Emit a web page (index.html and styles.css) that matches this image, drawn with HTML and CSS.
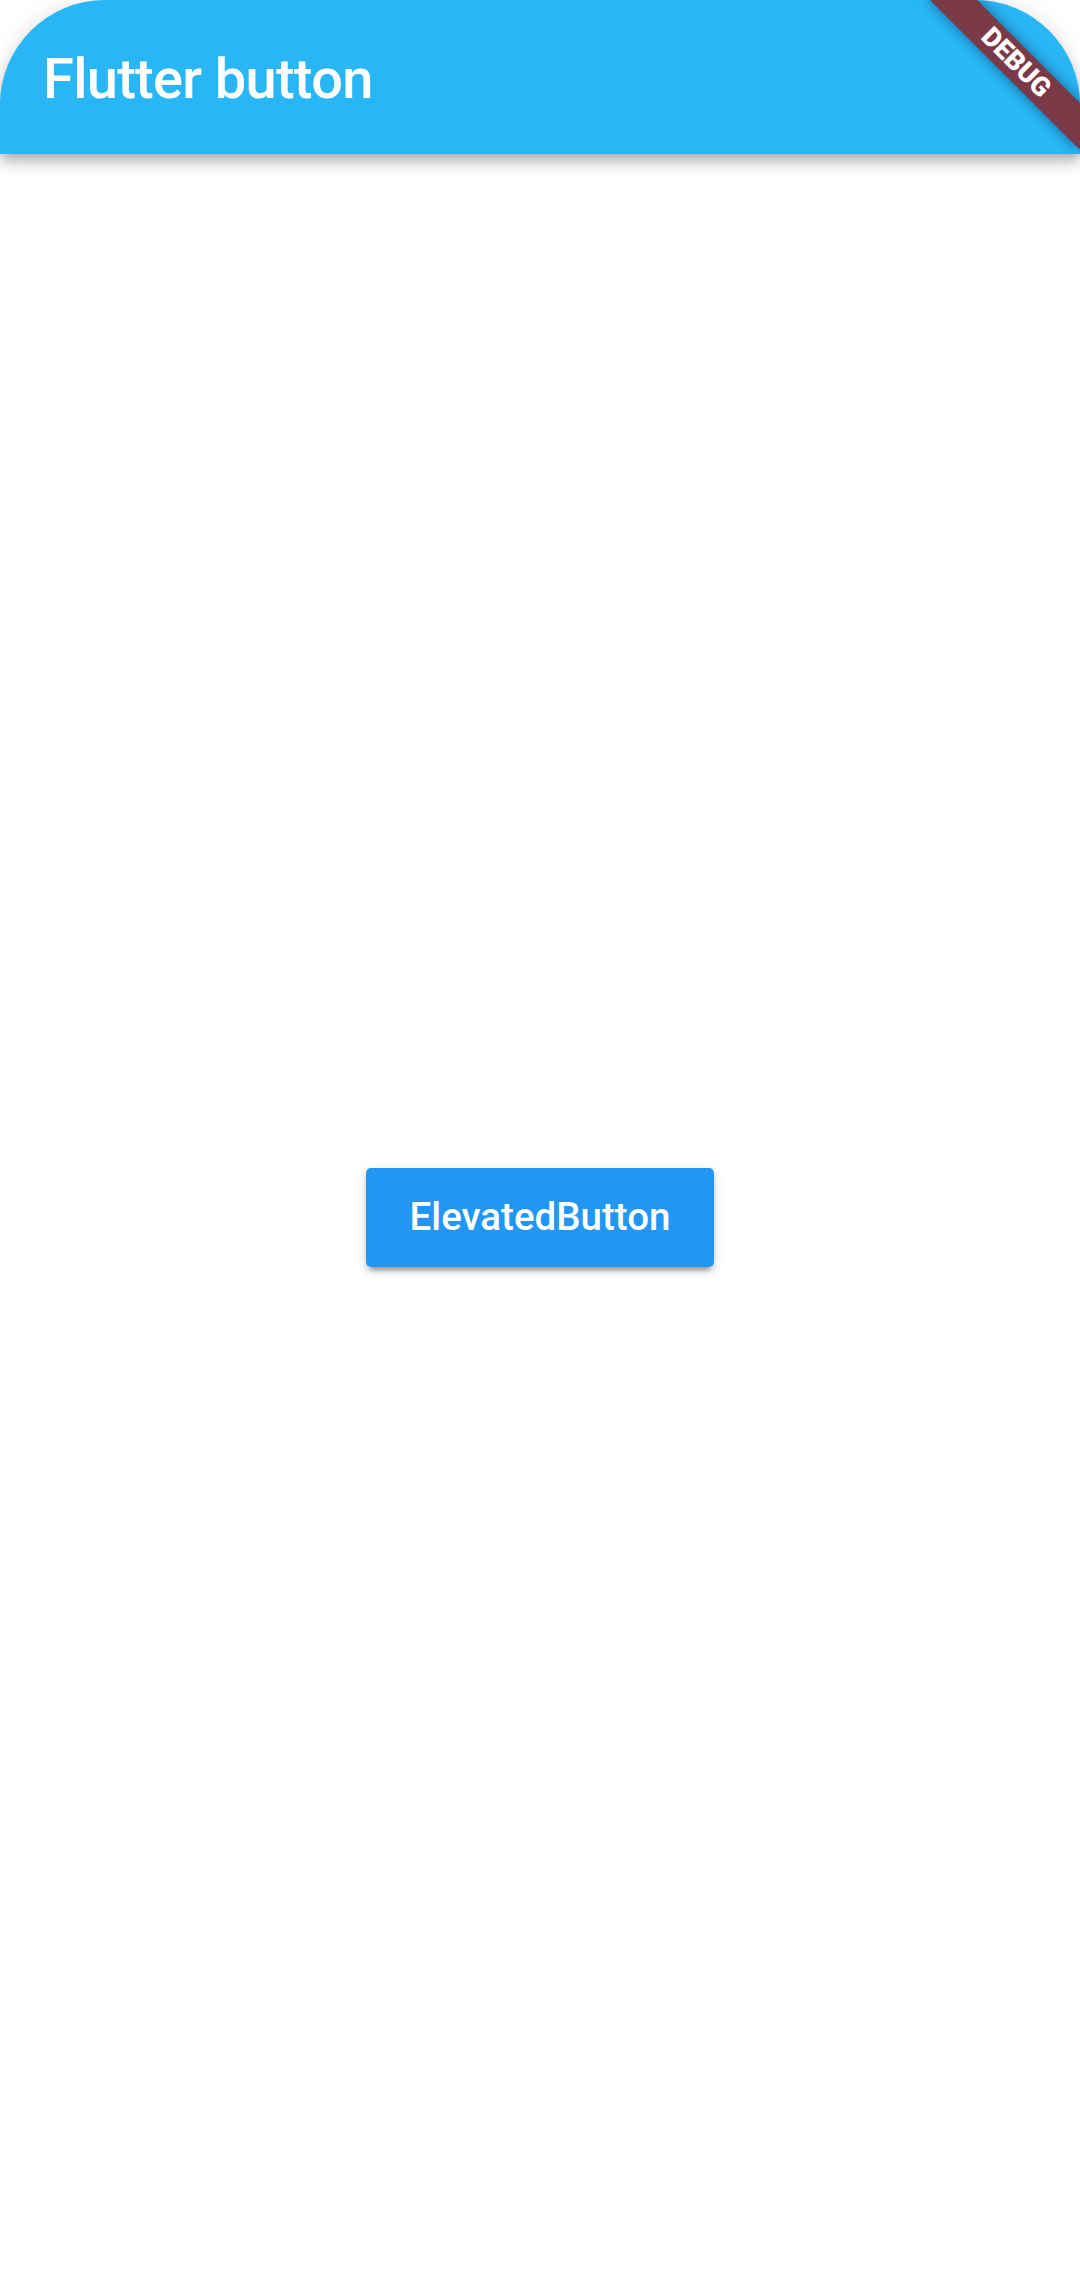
FILE: index.html
```html
<!DOCTYPE html>
<html lang="en">
<head>
<meta charset="utf-8">
<title>Flutter button</title>
<link rel="stylesheet" href="styles.css">
</head>
<body>
<div class="app">
  <header class="appbar">
    <h1 class="title">Flutter button</h1>
  </header>
  <main class="content">
    <button class="elevated" type="button">ElevatedButton</button>
  </main>
  <div class="debug-banner"><span>DEBUG</span></div>
</div>
</body>
</html>
```

FILE: styles.css
```css
html, body {
  margin: 0;
  padding: 0;
  width: 1080px;
  height: 2280px;
  overflow: hidden;
  background: #ffffff;
}

.app {
  position: relative;
  width: 1080px;
  height: 2280px;
  display: flex;
  flex-direction: column;
  font-family: Roboto, "Noto Sans", sans-serif;
  overflow: hidden;
}

.appbar {
  position: relative;
  z-index: 2;
  height: 154px;
  flex: 0 0 154px;
  background: #29b6f6;
  border-radius: 105px 105px 0 0;
  display: flex;
  align-items: center;
  padding: 4px 0 0 43px;
  box-sizing: border-box;
  box-shadow: 0 5px 10px -3px rgba(0,0,0,0.2),
              0 10px 13px 0 rgba(0,0,0,0.14),
              0 3px 26px 0 rgba(0,0,0,0.12);
}

.title {
  margin: 0;
  color: #ffffff;
  font-size: 56px;
  font-weight: 500;
  line-height: 1;
  letter-spacing: -0.7px;
}

.content {
  flex: 1 1 auto;
  display: flex;
  align-items: center;
  justify-content: center;
}

.elevated {
  width: 348px;
  height: 99px;
  border: none;
  border-radius: 5px;
  background: #2196f3;
  color: #ffffff;
  font-family: Roboto, "Noto Sans", sans-serif;
  font-size: 38.5px;
  font-weight: 500;
  line-height: 1;
  padding: 0;
  box-shadow: 0 8px 3px -5px rgba(0,0,0,0.2),
              0 5px 5px 0 rgba(0,0,0,0.14),
              0 3px 13px 0 rgba(0,0,0,0.12);
}

.debug-banner {
  position: absolute;
  z-index: 5;
  left: 910px;
  top: 46px;
  width: 212px;
  height: 33px;
  transform: rotate(45deg);
  background: linear-gradient(rgba(183, 28, 28, 0.63), rgba(183, 28, 28, 0.63)), rgba(0, 0, 0, 0.42);
  box-shadow: 0 0 14px rgba(0,0,0,0.45);
  display: flex;
  align-items: center;
  justify-content: center;
}

.debug-banner span {
  color: #ffffff;
  font-family: Roboto, "Noto Sans", sans-serif;
  font-size: 26.8px;
  font-weight: 900;
  line-height: 1;
}
```
